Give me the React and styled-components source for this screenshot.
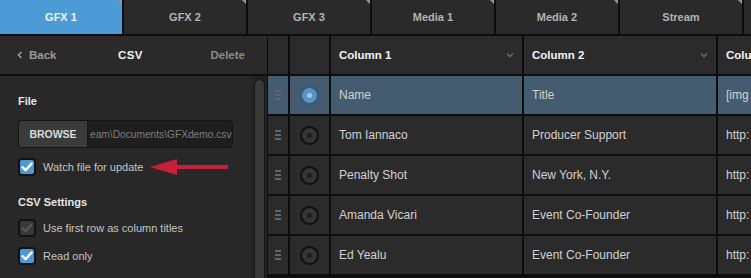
import React from "react";
import styled, { createGlobalStyle } from "styled-components";

const GlobalStyle = createGlobalStyle`
  html, body {
    margin: 0;
    padding: 0;
    background: #0d0d0d;
  }
  * {
    box-sizing: border-box;
  }
`;

const StyledApp = styled.div`
  width: 751px;
  height: 278px;
  overflow: hidden;
  display: flex;
  flex-direction: column;
  gap: 2px;
  background-color: #0d0d0d;
  font-family: "Liberation Sans", Arial, sans-serif;
`;

const StyledTabBar = styled.div`
  display: flex;
  gap: 2px;
  height: 34px;
  flex-shrink: 0;
`;

const StyledTab = styled.div`
  position: relative;
  width: 122px;
  flex-shrink: 0;
  display: flex;
  align-items: center;
  justify-content: center;
  font-size: 11px;
  font-weight: bold;
  color: ${(p) => (p.$active ? "#eef4fa" : "#b4b4b4")};
  background-color: ${(p) => (p.$active ? "#4d9bd6" : "#2a2a2a")};

  &::after {
    content: "";
    position: absolute;
    top: 0;
    right: 0;
    border-top: 4px solid #9a9a9a;
    border-left: 4px solid transparent;
  }
`;

const StyledBody = styled.div`
  flex: 1;
  display: flex;
  gap: 1px;
  min-height: 0;
`;

const StyledLeftPanel = styled.div`
  width: 267px;
  flex-shrink: 0;
  display: flex;
  flex-direction: column;
  gap: 2px;
`;

const StyledPanelHeader = styled.div`
  height: 38px;
  flex-shrink: 0;
  display: flex;
  align-items: center;
  justify-content: space-between;
  padding: 0 22px 0 16px;
  background-color: #2a2a2a;
  font-size: 11.5px;
  font-weight: bold;
`;

const StyledBack = styled.span`
  display: flex;
  align-items: center;
  gap: 5px;
  width: 70px;
  color: #9a9a9a;
`;

const StyledTitle = styled.span`
  color: #f2f2f2;
  font-size: 11.5px;
  letter-spacing: 0.4px;
`;

const StyledDelete = styled.span`
  width: 70px;
  text-align: right;
  color: #8c8c8c;
`;

const StyledPanelMain = styled.div`
  flex: 1;
  display: flex;
  background-color: #282828;
`;

const StyledPanelContent = styled.div`
  flex: 1;
  padding: 19px 0 0 18px;
  display: flex;
  flex-direction: column;
`;

const StyledSectionLabel = styled.div`
  height: 14px;
  font-size: 11px;
  font-weight: bold;
  color: #e6e6e6;
  margin-top: ${(p) => p.$top || 0}px;
  margin-bottom: ${(p) => p.$gap}px;
`;

const StyledFileInput = styled.div`
  width: 215px;
  height: 28px;
  display: flex;
  border: 1px solid #141414;
  border-radius: 4px;
  background-color: #1e1e1e;
  overflow: hidden;
`;

const StyledBrowse = styled.div`
  width: 69px;
  flex-shrink: 0;
  display: flex;
  align-items: center;
  justify-content: center;
  background-color: #3b3b3b;
  border-right: 1px solid #181818;
  color: #dadada;
  font-size: 10.5px;
  font-weight: bold;
`;

const StyledPath = styled.div`
  flex: 1;
  display: flex;
  align-items: center;
  padding-left: 2px;
  overflow: hidden;
  white-space: nowrap;
  color: #7e7e7e;
  font-size: 10.2px;
`;

const StyledCheckRow = styled.div`
  display: flex;
  align-items: center;
  gap: 7px;
  height: 18px;
  margin-top: ${(p) => p.$top}px;
  font-size: 11px;
  color: #c4c4c4;
`;

const StyledCheckbox = styled.div`
  width: 18px;
  height: 18px;
  flex-shrink: 0;
  display: flex;
  align-items: center;
  justify-content: center;
  border: 2px solid #121212;
  border-radius: 4px;
  background-color: ${(p) => (p.$disabled ? "#383838" : "#4b9ad6")};
`;

const StyledScrollTrack = styled.div`
  width: 17px;
  flex-shrink: 0;
  padding: 3px 2px 0 4px;
  background: linear-gradient(90deg, #262626, #1f1f1f 60%, #242424);
`;

const StyledScrollThumb = styled.div`
  height: 100%;
  border: 1px solid #161616;
  border-bottom: none;
  border-radius: 6px 6px 0 0;
  background-color: #383838;
`;

const StyledGrid = styled.div`
  flex: 1;
  display: grid;
  grid-template-columns: 20px 39px 191px 192px 60px;
  grid-auto-rows: 38px;
  gap: 2px;
  overflow: hidden;
`;

const StyledCell = styled.div`
  display: flex;
  align-items: center;
  justify-content: ${(p) => (p.$center ? "center" : "space-between")};
  padding: ${(p) => (p.$center ? "0" : "0 8px 0 8px")};
  background-color: ${(p) => (p.$selected ? "#445b70" : "#2b2b2b")};
  color: ${(p) => (p.$head ? "#f4f4f4" : "#d2d2d2")};
  font-size: ${(p) => (p.$head ? "11.5px" : "12px")};
  font-weight: ${(p) => (p.$head ? "bold" : "normal")};
  white-space: nowrap;
  overflow: hidden;
`;

const StyledHandle = styled.div`
  display: flex;
  flex-direction: column;
  gap: 2px;

  span {
    width: 6px;
    height: 2px;
    background-color: #5e6670;
  }
`;

const StyledRadio = styled.div`
  width: 19px;
  height: 19px;
  border-radius: 50%;
  display: flex;
  align-items: center;
  justify-content: center;
  border: 2px solid ${(p) => (p.$on ? "#36597a" : "#101010")};
  background-color: ${(p) => (p.$on ? "#5b93c6" : "#353535")};

  &::after {
    content: "";
    width: 5px;
    height: 5px;
    border-radius: 50%;
    background-color: ${(p) => (p.$on ? "#a9c6e0" : "#1f1f1f")};
  }
`;

const Check = ({ color = "#fff" }) => (
  <svg width="12" height="10" viewBox="0 0 12 10">
    <path
      d="M1.5 5.2 L4.6 8.2 L10.5 1.6"
      fill="none"
      stroke={color}
      strokeWidth="2.4"
      strokeLinecap="round"
      strokeLinejoin="round"
    />
  </svg>
);

const Chevron = ({ dir = "down", color = "#666" }) => (
  <svg width="8" height="8" viewBox="0 0 8 8">
    <path
      d={dir === "down" ? "M1 2.5 L4 5.5 L7 2.5" : "M5.5 1 L2.5 4 L5.5 7"}
      fill="none"
      stroke={color}
      strokeWidth="1.6"
    />
  </svg>
);

const RedArrow = () => (
  <svg width="78" height="18" viewBox="0 0 78 18">
    <path d="M0 9 L27 1 L27 7 L78 7 L78 11 L27 11 L27 17 Z" fill="#c81f3a" />
  </svg>
);

const tabs = ["GFX 1", "GFX 2", "GFX 3", "Media 1", "Media 2", "Stream", ""];

const rows = [
  ["Name", "Title", "[img"],
  ["Tom Iannaco", "Producer Support", "http:"],
  ["Penalty Shot", "New York, N.Y.", "http:"],
  ["Amanda Vicari", "Event Co-Founder", "http:"],
  ["Ed Yealu", "Event Co-Founder", "http:"],
];

const App = () => {
  return (
    <>
      <GlobalStyle />
      <StyledApp>
        <StyledTabBar>
          {tabs.map((t, i) => (
            <StyledTab key={i} $active={i === 0}>
              {t}
            </StyledTab>
          ))}
        </StyledTabBar>
        <StyledBody>
          <StyledLeftPanel>
            <StyledPanelHeader>
              <StyledBack>
                <Chevron dir="left" color="#9a9a9a" />
                Back
              </StyledBack>
              <StyledTitle>CSV</StyledTitle>
              <StyledDelete>Delete</StyledDelete>
            </StyledPanelHeader>
            <StyledPanelMain>
              <StyledPanelContent>
                <StyledSectionLabel $gap={11}>File</StyledSectionLabel>
                <StyledFileInput>
                  <StyledBrowse>BROWSE</StyledBrowse>
                  <StyledPath>eam\Documents\GFXdemo.csv</StyledPath>
                </StyledFileInput>
                <StyledCheckRow $top={10}>
                  <StyledCheckbox>
                    <Check />
                  </StyledCheckbox>
                  Watch file for update
                  <RedArrow />
                </StyledCheckRow>
                <StyledSectionLabel $top={20} $gap={0}>
                  CSV Settings
                </StyledSectionLabel>
                <StyledCheckRow $top={9}>
                  <StyledCheckbox $disabled>
                    <Check color="#555" />
                  </StyledCheckbox>
                  Use first row as column titles
                </StyledCheckRow>
                <StyledCheckRow $top={10}>
                  <StyledCheckbox>
                    <Check />
                  </StyledCheckbox>
                  Read only
                </StyledCheckRow>
              </StyledPanelContent>
              <StyledScrollTrack>
                <StyledScrollThumb />
              </StyledScrollTrack>
            </StyledPanelMain>
          </StyledLeftPanel>
          <StyledGrid>
            <StyledCell $center $head />
            <StyledCell $center $head />
            <StyledCell $head>
              Column 1
              <Chevron />
            </StyledCell>
            <StyledCell $head>
              Column 2
              <Chevron />
            </StyledCell>
            <StyledCell $head>Column 3</StyledCell>
            {rows.map((r, i) => (
              <React.Fragment key={i}>
                <StyledCell $center $selected={i === 0}>
                  <StyledHandle>
                    <span />
                    <span />
                    <span />
                  </StyledHandle>
                </StyledCell>
                <StyledCell $center $selected={i === 0}>
                  <StyledRadio $on={i === 0} />
                </StyledCell>
                {r.map((c, j) => (
                  <StyledCell key={j} $selected={i === 0}>
                    {c}
                  </StyledCell>
                ))}
              </React.Fragment>
            ))}
          </StyledGrid>
        </StyledBody>
      </StyledApp>
    </>
  );
};

export default App;
